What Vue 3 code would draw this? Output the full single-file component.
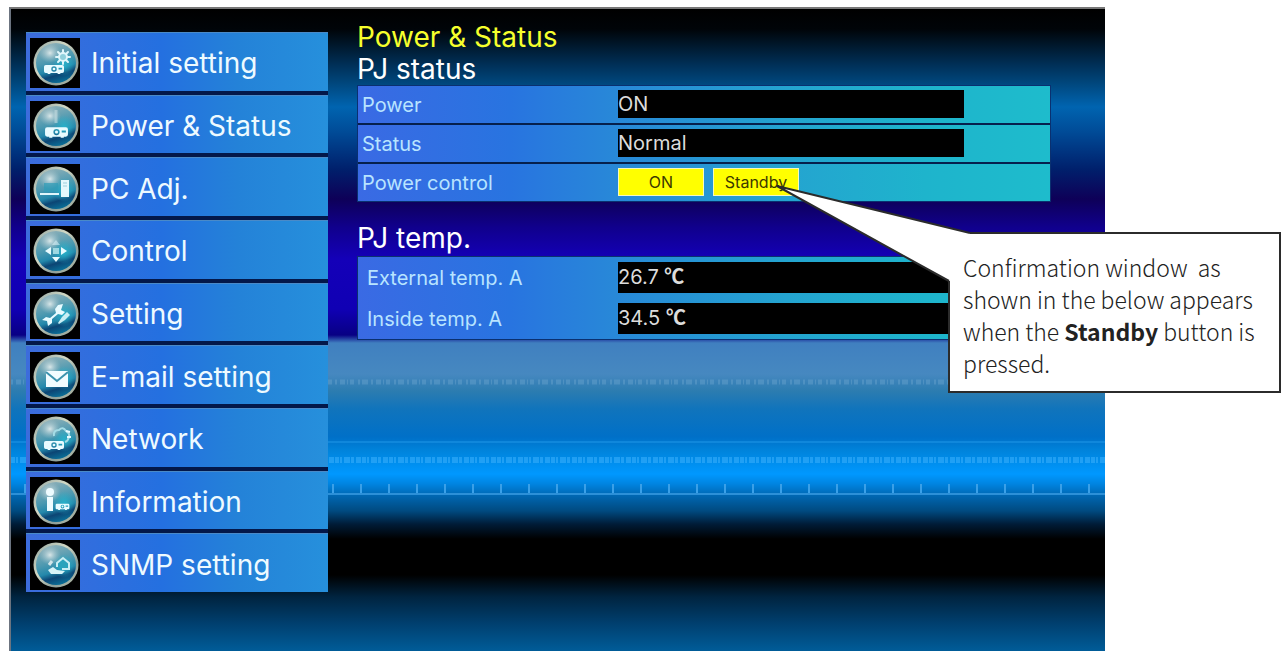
<script setup>
import { ref } from 'vue';

const menuItems = [
  { id: 'initial', label: 'Initial setting' },
  { id: 'power', label: 'Power & Status' },
  { id: 'pc', label: 'PC Adj.' },
  { id: 'control', label: 'Control' },
  { id: 'setting', label: 'Setting' },
  { id: 'mail', label: 'E-mail setting' },
  { id: 'network', label: 'Network' },
  { id: 'info', label: 'Information' },
  { id: 'snmp', label: 'SNMP setting' },
];

const power = ref('ON');
const status = ref('Normal');

const temps = [
  { label: 'External temp. A', value: '26.7', unit: '℃' },
  { label: 'Inside temp. A', value: '34.5', unit: '℃' },
];

const setPower = (value) => {
  power.value = value;
};
</script>

<template>
  <div class="page">
    <!-- shared gradients and the projector shape used by several icons -->
    <svg class="defs" width="0" height="0" aria-hidden="true">
      <defs>
        <linearGradient id="rim" x1="0" y1="0" x2="1" y2="1">
          <stop offset="0" stop-color="#8fa3a0" />
          <stop offset="0.4" stop-color="#d2d8c4" />
          <stop offset="0.7" stop-color="#8d9f9a" />
          <stop offset="1" stop-color="#c4c8ae" />
        </linearGradient>
        <linearGradient id="ball" x1="0.3" y1="0" x2="0.6" y2="1">
          <stop offset="0" stop-color="#8fb0b8" />
          <stop offset="0.45" stop-color="#4a98b0" />
          <stop offset="0.66" stop-color="#2388ab" />
          <stop offset="0.8" stop-color="#0c4574" />
          <stop offset="1" stop-color="#0a7098" />
        </linearGradient>
        <radialGradient id="shine">
          <stop offset="0" stop-color="#e4eeee" stop-opacity="0.9" />
          <stop offset="1" stop-color="#a8c4cc" stop-opacity="0" />
        </radialGradient>
        <radialGradient id="glow">
          <stop offset="0" stop-color="#27b4cc" stop-opacity="0.9" />
          <stop offset="1" stop-color="#27b4cc" stop-opacity="0" />
        </radialGradient>
        <symbol id="projector" viewBox="0 0 24 11">
          <path
            fill="#e8fbff"
            fill-rule="evenodd"
            d="M3 1h18q2 0 2 2v5q0 2-2 2h-2v1h-3v-1H8v1H5v-1H3Q1 10 1 8V3q0-2 2-2zM12 2.500a3 3 0 1 0 0 6 3 3 0 0 0 0-6zM17 4h4v2h-4z"
          />
          <circle cx="12" cy="5.500" r="1.500" fill="#e8fbff" />
        </symbol>
      </defs>
    </svg>

    <div class="screen">
      <svg class="bands" width="100%" height="120" aria-hidden="true">
        <defs>
          <pattern id="ticks" width="28" height="12" patternUnits="userSpaceOnUse" y="108">
            <path d="M14 1v10" stroke="#3aa0e8" stroke-width="2" />
          </pattern>
        </defs>
        <line class="code-faint" x1="0" y1="7" x2="100%" y2="7" />
        <line class="hair" x1="0" y1="67" x2="100%" y2="67" />
        <line class="code-bright" x1="0" y1="85" x2="100%" y2="85" />
        <rect x="0" y="108" width="100%" height="12" fill="url(#ticks)" />
        <line class="hair-strong" x1="0" y1="119" x2="100%" y2="119" />
      </svg>

      <nav class="sidebar">
        <a v-for="item in menuItems" :key="item.id" :href="'#' + item.id" class="menu-item">
          <svg class="menu-icon" viewBox="0 0 50 50" width="50" height="50" aria-hidden="true">
            <rect width="50" height="50" fill="#000" />
            <circle cx="26" cy="25" r="22.500" fill="url(#rim)" />
            <circle cx="26" cy="25" r="20" fill="url(#ball)" />
            <ellipse cx="34" cy="26" rx="11" ry="12" fill="url(#glow)" />
            <ellipse cx="20" cy="15" rx="11" ry="10" fill="url(#shine)" />

            <g v-if="item.id === 'initial'">
              <use href="#projector" x="13" y="26" width="22" height="10" />
              <path
                d="M33 12v3M33 23v3M26 19h3M37 19h3M28 14l2 2M36 22l2 2M38 14l-2 2M30 22l-2 2"
                stroke="#dff6fb"
                stroke-width="2"
                stroke-linecap="round"
              />
              <circle cx="33" cy="19" r="4" fill="#8fd0dc" stroke="#dff6fb" stroke-width="2" />
            </g>
            <g v-else-if="item.id === 'power'">
              <use href="#projector" x="14" y="25" width="25" height="12" />
              <path d="M26 9v13" stroke="#d4e6e8" stroke-width="3" opacity="0.5" />
            </g>
            <g v-else-if="item.id === 'pc'">
              <path d="M31 16h8v17h-8z" fill="#e4f8fc" />
              <path d="M14 19h14v9H14z" fill="#2f9cb8" opacity="0.7" />
              <path d="M10 30h19" stroke="#dff6fb" stroke-width="2" />
              <path d="M33 19h4M33 22h4" stroke="#9ccfdc" />
            </g>
            <g v-else-if="item.id === 'control'" fill="#e8fbff">
              <path d="M15 25l6-4v8zM37 25l-6-4v8zM26 36l-4-5h8z" />
              <path d="M26 14l-4 5h8z" opacity="0.5" />
              <path d="M23 22h6v6h-6z" fill="#9ed8e2" />
            </g>
            <g v-else-if="item.id === 'setting'">
              <path
                fill="#e8fbff"
                d="M33 15l-5 1-3 4 1 4-6 5-4-1-4 3 5 1 1 5 4-3v-4l6-5 4 1 3-3-4-2z"
              />
              <path d="M28 34l4-6 5-5 3 3-5 5-6 4z" fill="#c8eef4" />
            </g>
            <g v-else-if="item.id === 'mail'">
              <path d="M16 19h22v16H16z" fill="#f2fcff" />
              <path d="M16 20l11 9 11-9" fill="none" stroke="#3c93ae" stroke-width="2" />
            </g>
            <g v-else-if="item.id === 'network'">
              <use href="#projector" x="13" y="26" width="22" height="10" />
              <path d="M24 22q-1-6 5-6 4-4 7 1 4 2 3 6-1 4-4 5" fill="none" stroke="#a4dce6" stroke-width="2" />
              <path d="M36 17l4 1M37 23h4" stroke="#e8fbff" stroke-width="2" />
            </g>
            <g v-else-if="item.id === 'info'">
              <circle cx="20" cy="15" r="4" fill="#eefcff" />
              <path d="M17 20h6v14h-6z" fill="#eefcff" />
              <use href="#projector" x="25" y="24" width="15" height="11" />
            </g>
            <g v-else>
              <path d="M27 27v-4l6-5 6 5v6h-7" fill="#2aa3bc" stroke="#c8eef4" stroke-width="2" />
              <path d="M18 30l5-3 4 3 8 1-3 3H21z" fill="#d8f4f8" />
              <path d="M22 21l-3 4" stroke="#d2e6ea" stroke-width="3" />
            </g>
          </svg>
          <span class="menu-label">{{ item.label }}</span>
        </a>
      </nav>

      <main class="content">
        <h1>Power &amp; Status</h1>

        <h2>PJ status</h2>
        <table class="panel ruled">
          <tbody>
            <tr>
              <th scope="row">Power</th>
              <td><output class="readout">{{ power }}</output></td>
            </tr>
            <tr>
              <th scope="row">Status</th>
              <td><output class="readout">{{ status }}</output></td>
            </tr>
            <tr>
              <th scope="row">Power control</th>
              <td>
                <div class="actions">
                  <button type="button" @click="setPower('ON')">ON</button>
                  <button type="button" @click="setPower('Standby')">Standby</button>
                </div>
              </td>
            </tr>
          </tbody>
        </table>

        <h2 class="spaced">PJ temp.</h2>
        <table class="panel temps">
          <tbody>
            <tr v-for="temp in temps" :key="temp.label">
              <th scope="row">{{ temp.label }}</th>
              <td>
                <output class="readout">{{ temp.value }} <span class="unit">{{ temp.unit }}</span></output>
              </td>
            </tr>
          </tbody>
        </table>
      </main>
    </div>

    <aside class="callout">
      <svg class="callout-tail" viewBox="0 0 200 100" width="200" height="100" aria-hidden="true">
        <path d="M1 2L194 49V62L180 97H173z" fill="#fff" />
        <path d="M194 49L1 2L173 97" fill="none" stroke="#2b2b2b" stroke-width="2" />
      </svg>
      <p>
        Confirmation window&nbsp; as<br />
        shown in the below appears<br />
        when the <strong>Standby</strong> button is<br />
        pressed.
      </p>
    </aside>
  </div>
</template>

<style>
body {
  margin: 0;
  background: #fff;
}
</style>

<style scoped>
.page {
  position: relative;
  min-height: 100vh;
  padding: 7px 179px 0 9px;
  box-sizing: border-box;
  display: flex;
  font-family: Inter, "Noto Sans CJK JP", sans-serif;
}

.defs {
  position: absolute;
}

.screen {
  position: relative;
  flex: 1;
  display: flex;
  gap: 29px;
  box-sizing: border-box;
  padding: 23px 54px 59px 15px;
  border-top: 2px solid #777;
  border-left: 2px solid #6c7480;
  background: linear-gradient(
    to bottom,
    #000 0,
    #000408 20px,
    #003058 56px,
    #004478 72px,
    #0064b0 98px,
    #004c98 122px,
    #00206c 160px,
    #0e0058 190px,
    #10008c 218px,
    #1400b8 250px,
    #1000b4 300px,
    #080084 326px,
    #4080c0 334px,
    #4688c0 365px,
    #2c7cb0 382px,
    #1074bc 400px,
    #0070c8 428px,
    #0084dc 442px,
    #0098ff 465px,
    #0084e0 475px,
    #0068b4 486px,
    #004a80 502px,
    #001c38 515px,
    #000 530px,
    #000 566px,
    #002440 588px,
    #004070 615px,
    #005c98 642px
  );
}

/* strip of code rows and ruler marks across the backdrop */
.bands {
  position: absolute;
  top: 366px;
  left: 0;
}

.code-faint {
  stroke: #6fa8d0;
  stroke-width: 5;
  stroke-dasharray: 2 3 5 2 1 2 4 4 2 2 6 3;
  opacity: 0.4;
}

.code-bright {
  stroke: #40b4ff;
  stroke-width: 6;
  stroke-dasharray: 4 1 2 2 6 1 3 2 5 1;
  opacity: 0.5;
}

.hair {
  stroke: #2098e8;
  stroke-width: 1;
}

.hair-strong {
  stroke: #2c90d8;
  stroke-width: 2;
}

.sidebar {
  position: relative;
  flex: 0 0 302px;
  display: grid;
  grid-auto-rows: 1fr;
  gap: 4px;
  background: #03184a;
}

.menu-item {
  display: flex;
  align-items: center;
  gap: 11px;
  padding: 5px 4px 2px 4px;
  border-top: 1px solid #4a8ac8;
  background: linear-gradient(to right, #3c6cdc 0, #2470e0 45%, #2482d8 70%, #2690dc 100%);
  color: #eefaff;
  font-size: 28px;
  line-height: 32px;
  text-decoration: none;
}

.menu-icon {
  flex: none;
  display: block;
}

.menu-label {
  white-space: nowrap;
}

.content {
  position: relative;
  flex: 1;
  min-width: 0;
  margin-top: -11px;
}

h1,
h2 {
  margin: 0;
  font-size: 28px;
  font-weight: 400;
  line-height: 32px;
  color: #fff;
}

h1 {
  color: #f6ff2c;
}

h2.spaced {
  margin: 20px 0 2px;
}

.panel {
  width: 100%;
  border-spacing: 0;
  border: 1px solid #0a3070;
  background: linear-gradient(to right, #3a6ae4 0, #2874e0 22%, #2888d8 37%, #24a4d0 62%, #1eb4cc 82%, #1ebccc 100%);
  color: #b8e4ff;
  font-size: 20px;
  line-height: 28px;
}

.panel th {
  width: 256px;
  padding: 0 0 0 4px;
  text-align: left;
  font-weight: 400;
}

.panel td {
  padding: 4px 0 5px;
}

.ruled tr + tr th,
.ruled tr + tr td {
  border-top: 2px solid #06204c;
}

.readout {
  display: block;
  width: 346px;
  background: #000;
  color: #dcdcdc;
}

.temps th {
  width: 251px;
  padding-left: 9px;
}

.temps td {
  padding: 5px 0;
}

.temps .readout {
  line-height: 31px;
}

.unit {
  font-family: "Noto Sans CJK JP", sans-serif;
  font-weight: 700;
  line-height: 20px;
}

.actions {
  display: flex;
  gap: 9px;
}

.actions button {
  width: 86px;
  height: 28px;
  padding: 0;
  border: 1px solid #f4f8c0;
  background: #ffff00;
  color: #3c3800;
  font-family: inherit;
  font-size: 16px;
  cursor: pointer;
}

/* note that points at the Standby button */
.callout {
  position: absolute;
  top: 232px;
  left: 948px;
  width: 333px;
  box-sizing: border-box;
  padding: 17px 0 12px 13px;
  border: 2px solid #2b2b2b;
  background: #fff;
  color: #222;
  font-family: "Noto Sans CJK JP", "Open Sans", sans-serif;
  font-size: 23px;
  font-weight: 300;
  line-height: 32px;
}

.callout-tail {
  position: absolute;
  top: -50px;
  left: -174px;
}

.callout p {
  position: relative;
  margin: 0;
  white-space: nowrap;
}

.callout strong {
  font-weight: 700;
}
</style>
